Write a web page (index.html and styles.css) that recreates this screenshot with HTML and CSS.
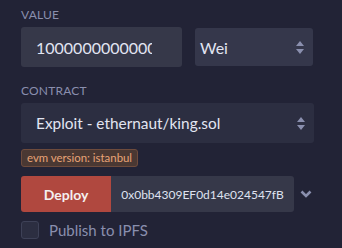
FILE: index.html
```html
<!DOCTYPE html>
<html>
<head>
    <meta name="viewport" content="width=device-width, initial-scale=1.0">
    <link rel="stylesheet" href="styles.css">
</head>
<body>
    <div class="panel">
        <!-- Value -->
        <div class="label">VALUE</div>
        <div class="value-row">
            <input class="value-input" type="text" value="1000000000000000000">
            <div class="select unit-select">
                <span>Wei</span>
                <svg class="updown" width="8" height="13" viewBox="0 0 8 13">
                    <path d="M4 0 L8 5 L0 5 Z M0 8 L8 8 L4 13 Z" fill="#8a8fae"/>
                </svg>
            </div>
        </div>

        <!-- Contract -->
        <div class="label contract-label">CONTRACT</div>
        <div class="select contract-select">
            <span>Exploit - ethernaut/king.sol</span>
            <svg class="updown" width="8" height="13" viewBox="0 0 8 13">
                <path d="M4 0 L8 5 L0 5 Z M0 8 L8 8 L4 13 Z" fill="#8a8fae"/>
            </svg>
        </div>
        <div class="badge-row">
            <span class="evm-badge">evm version: istanbul</span>
        </div>

        <!-- Deploy -->
        <div class="deploy-row">
            <button class="deploy-btn">Deploy</button>
            <div class="address">0x0bb4309EF0d14e024547fB</div>
            <svg class="chevron" width="12" height="8" viewBox="0 0 12 8">
                <path d="M1.5 1.5 L6 6 L10.5 1.5" fill="none" stroke="#8a8fae" stroke-width="2.6"/>
            </svg>
        </div>

        <label class="check-row">
            <span class="checkbox"></span>
            <span class="check-text">Publish to IPFS</span>
        </label>
    </div>
</body>
</html>
```

FILE: styles.css
```css
* {
    margin: 0;
    padding: 0;
    box-sizing: border-box;
}

html, body {
    width: 100%;
    height: 100%;
    overflow: hidden;
    background: #222336;
    font-family: Lato, "Open Sans", sans-serif;
}

.panel {
    padding: 8px 0 0 21px;
    display: flex;
    flex-direction: column;
    align-items: flex-start;
}

.label {
    font-size: 12px;
    line-height: 14px;
    color: #8a8fae;
    letter-spacing: 0.2px;
}

.contract-label {
    margin-top: 17px;
}

.value-row {
    margin-top: 5px;
    display: flex;
    align-items: center;
    gap: 13px;
}

.value-input {
    width: 161px;
    height: 40px;
    border: none;
    outline: none;
    border-radius: 3px;
    background: #363849;
    color: #e2e5f2;
    font-family: inherit;
    font-size: 16px;
    padding: 0 30px 0 15px;
}

.select {
    display: flex;
    align-items: center;
    justify-content: space-between;
    background: #35374b;
    border-radius: 3px;
    color: #e2e5f2;
    font-size: 16px;
}

.unit-select {
    width: 118px;
    height: 38px;
    padding: 0 9px 0 5px;
}

.contract-select {
    margin-top: 5px;
    width: 293px;
    height: 40px;
    padding: 0 9px 0 15px;
    background: #2c2e41;
    font-size: 15.4px;
}

.updown {
    display: block;
}

.badge-row {
    margin-top: 6px;
    height: 18px;
}

.evm-badge {
    display: block;
    height: 18px;
    line-height: 16px;
    padding: 0 5px;
    font-size: 11.4px;
    color: #e8a477;
    background: #4a3833;
    border: 1px solid #6e4b3c;
    border-radius: 3px;
}

.deploy-row {
    margin-top: 9px;
    display: flex;
    align-items: center;
}

.deploy-btn {
    width: 90px;
    height: 36px;
    border: none;
    border-radius: 3px 0 0 3px;
    background: #b0483f;
    color: #f4f0f0;
    font-family: inherit;
    font-size: 14px;
    font-weight: bold;
}

.address {
    width: 183px;
    height: 36px;
    display: flex;
    align-items: center;
    justify-content: center;
    background: #363849;
    border-radius: 0 3px 3px 0;
    color: #dfe2f0;
    font-size: 12px;
}

.chevron {
    margin-left: 6px;
    display: block;
}

.check-row {
    margin-top: 9px;
    height: 18px;
    display: flex;
    align-items: center;
    gap: 10px;
}

.checkbox {
    width: 18px;
    height: 18px;
    background: #2c2e41;
    border: 1px solid #3e4157;
    border-radius: 3px;
}

.check-text {
    font-size: 15px;
    color: #8a8fae;
}
```
